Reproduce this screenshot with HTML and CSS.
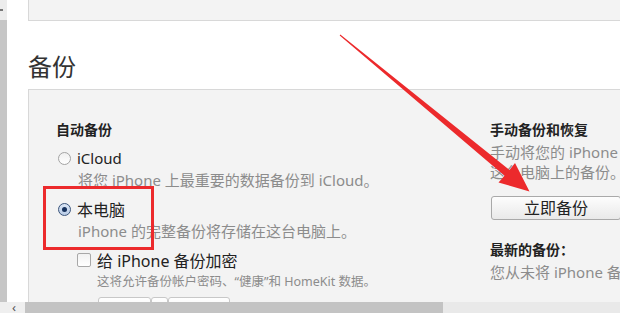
FILE: index.html
```html
<!DOCTYPE html>
<html lang="zh-CN">

<head>
    <meta charset="UTF-8">
    <title>备份</title>
    <link rel="stylesheet" href="styles.css">
</head>

<body>

    <div class="frame">
        <div class="vbar">
            <div class="vbar-top"><span class="vbar-arrow"></span></div>
            <div class="vbar-track"></div>
        </div>

        <div class="main">
            <div class="panel-top"></div>

            <h2 class="title">备份</h2>

            <div class="panel">
                <div class="col-left">
                    <h3 class="head">自动备份</h3>

                    <div class="opt">
                        <span class="radio"></span>
                        <span class="opt-label small">iCloud</span>
                    </div>
                    <p class="desc">将您 iPhone 上最重要的数据备份到 iCloud。</p>

                    <div class="opt gap">
                        <span class="radio on"></span>
                        <span class="opt-label">本电脑</span>
                    </div>
                    <p class="desc">iPhone 的完整备份将存储在这台电脑上。</p>

                    <div class="opt gap sub">
                        <span class="check"></span>
                        <span class="opt-label">给 iPhone 备份加密</span>
                    </div>
                    <p class="desc sub-desc">这将允许备份帐户密码、“健康”和 HomeKit 数据。</p>

                    <div class="btn-group">
                        <span class="seg seg-a"></span>
                        <span class="seg seg-b"></span>
                        <span class="seg seg-c"></span>
                    </div>
                </div>

                <div class="col-right">
                    <h3 class="head">手动备份和恢复</h3>
                    <p class="info">手动将您的 iPhone 备份到这台电脑上或恢复存储在<br>这台电脑上的备份。</p>
                    <button class="btn">立即备份</button>
                    <h3 class="head latest">最新的备份：</h3>
                    <p class="info">您从未将 iPhone 备份到这台电脑上。</p>
                </div>
            </div>
        </div>
    </div>

    <div class="hbar">
        <div class="hbar-left">&lsaquo;</div>
        <div class="hbar-thumb"></div>
        <div class="hbar-track"></div>
    </div>

    <!-- 红色标注 -->
    <svg class="marks" width="620" height="319" viewBox="0 0 620 319">
        <rect x="44.5" y="187.5" width="108" height="61" fill="none" stroke="#ec2a2c" stroke-width="3" />
        <polygon fill="#ec2a2c"
            points="340.3,34.6 509.5,170 515,163 529.5,191.5 498.5,182.5 504.5,175.8 339.7,35.4" />
    </svg>

</body>

</html>
```

FILE: styles.css
```css
body {
    margin: 0;
    width: 620px;
    height: 319px;
    overflow: hidden;
    background-color: #fff;
    font-family: "Noto Sans", "Noto Sans CJK SC", sans-serif;
    color: #333;
}

.frame {
    display: flex;
    height: 302px;
}

.vbar {
    width: 7px;
    display: flex;
    flex-direction: column;
}

.vbar-top {
    height: 20px;
    background-color: #ececec;
    position: relative;
}

.vbar-arrow {
    position: absolute;
    left: 0;
    top: 9px;
    width: 3px;
    height: 2px;
    background-color: #777;
}

.vbar-track {
    flex: 1;
    background-color: #c6c6c6;
}

.main {
    flex: 1;
    padding-left: 21px;
    overflow: hidden;
}

.panel-top {
    height: 20px;
    background-color: #f3f3f3;
    border: 1px solid #d8d8d8;
    border-top: 0;
    border-right: 0;
}

.title {
    margin: 32px 0 8px;
    font-size: 24px;
    line-height: 28px;
    font-weight: normal;
    color: #333;
}

.panel {
    display: grid;
    grid-template-columns: 434px 1fr;
    height: 300px;
    padding: 30px 0 0 27px;
    background-color: #f3f3f3;
    border: 1px solid #d8d8d8;
    border-right: 0;
}

.head {
    margin: 0;
    font-size: 14px;
    line-height: 20px;
    font-weight: bold;
    color: #222;
    white-space: nowrap;
}

.opt {
    display: flex;
    align-items: center;
    height: 22px;
    margin-top: 7px;
    margin-left: 2px;
}

.opt.sub {
    margin-left: 21px;
}

.opt-label {
    font-size: 16px;
    margin-left: 6px;
    color: #222;
    white-space: nowrap;
}

.opt-label.small {
    font-size: 15px;
}

.radio {
    width: 11px;
    height: 11px;
    border-radius: 50%;
    border: 1px solid #a3a3a3;
    background: linear-gradient(#f0f0f0, #fff);
    position: relative;
}

.radio.on {
    border-color: #3b557b;
    background: linear-gradient(#dbe6f5, #b8cbe6);
}

.radio.on::after {
    content: "";
    position: absolute;
    left: 3px;
    top: 3px;
    width: 5px;
    height: 5px;
    border-radius: 50%;
    background-color: #16315c;
}

.check {
    width: 12px;
    height: 12px;
    border: 1px solid #a8a8a8;
    border-radius: 2px;
    background: linear-gradient(#f2f2f2, #fff);
}

.desc {
    margin: 0;
    padding-left: 22px;
    font-size: 15px;
    line-height: 22px;
    color: #8c8c8c;
    white-space: nowrap;
}

.desc.sub-desc {
    padding-left: 41px;
    font-size: 12.5px;
}

.btn-group {
    display: flex;
    margin: 4px 0 0 42px;
    height: 22px;
}

.seg {
    height: 22px;
    border: 1px solid #c8c8c8;
    border-radius: 3px;
    background: linear-gradient(#fff, #eee);
}

.seg-a {
    width: 51px;
}

.seg-b {
    width: 15px;
}

.seg-c {
    width: 60px;
}

.col-right {
    overflow: hidden;
}

.info {
    margin: 2px 0 0;
    font-size: 15px;
    line-height: 20px;
    color: #8c8c8c;
    white-space: nowrap;
}

.btn {
    display: block;
    width: 130px;
    height: 24px;
    margin: 14px 0 0 1px;
    padding: 0;
    font-family: inherit;
    font-size: 16px;
    line-height: 22px;
    color: #222;
    border: 1px solid #a9a9a9;
    border-radius: 3px;
    background: linear-gradient(#fdfdfd, #e9e9e9);
}

.latest {
    margin-top: 20px;
}

.hbar {
    display: flex;
    height: 11px;
}

.hbar-left {
    width: 25px;
    background-color: #efefef;
    font-size: 13px;
    line-height: 11px;
    text-indent: 12px;
    color: #555;
}

.hbar-thumb {
    width: 418px;
    background-color: #c3c3c3;
}

.hbar-track {
    flex: 1;
    background-color: #e9e9e9;
}

.marks {
    position: absolute;
    left: 0;
    top: 0;
}
```
